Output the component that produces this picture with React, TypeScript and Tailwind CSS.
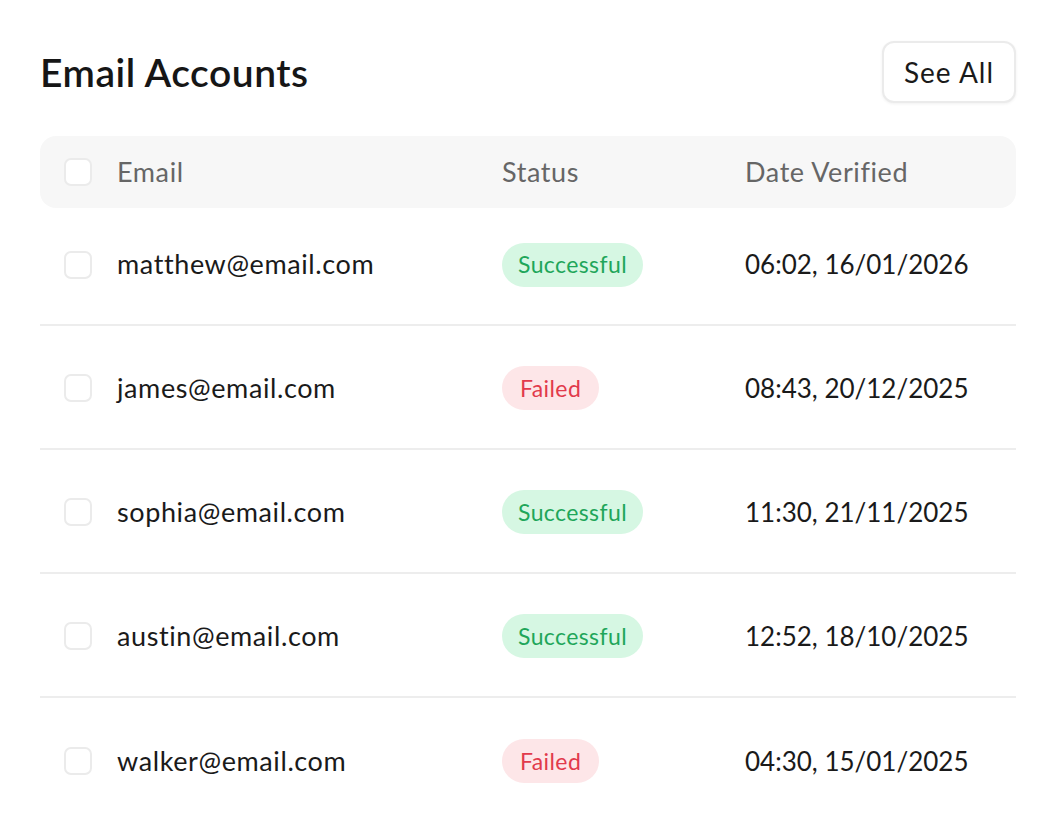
import React from "react";

type Row = { email: string; ok: boolean; date: string };

const rows: Row[] = [
  { email: "matthew@email.com", ok: true, date: "06:02, 16/01/2026" },
  { email: "james@email.com", ok: false, date: "08:43, 20/12/2025" },
  { email: "sophia@email.com", ok: true, date: "11:30, 21/11/2025" },
  { email: "austin@email.com", ok: true, date: "12:52, 18/10/2025" },
  { email: "walker@email.com", ok: false, date: "04:30, 15/01/2025" },
];

function Box() {
  return <div className="w-[28px] h-[28px] rounded-[7px] border-2 border-[#ebebeb] bg-white shrink-0" />;
}

export default function App() {
  return (
    <div
      className="w-[1056px] h-[828px] bg-white overflow-hidden px-[40px] pt-[41px]"
      style={{ fontFamily: "Lato, 'Noto Sans', sans-serif" }}
    >
      <div className="flex items-center justify-between h-[62px] mb-[33px]">
        <h1 className="text-[39px] font-semibold text-[#161616] tracking-[0.5px]">Email Accounts</h1>
        <button className="w-[134px] h-[62px] rounded-[12px] border-2 border-[#ebebeb] bg-white shadow-[0_1px_3px_rgba(0,0,0,0.06)] text-[28px] tracking-[1px] text-[#1a1a1a]">
          See All
        </button>
      </div>
      <div className="flex items-center h-[72px] rounded-[16px] bg-[#f7f7f7] px-[24px] text-[27px] tracking-[0.6px] text-[#666666]">
        <Box />
        <div className="ml-[25px] w-[385px]">Email</div>
        <div className="w-[243px]">Status</div>
        <div>Date Verified</div>
      </div>
      {rows.map((r, i) => (
        <div
          key={r.email}
          className={
            "flex items-center px-[24px] text-[#1a1a1a] " +
            (i === 0 ? "h-[118px] pb-[3px] " : "h-[124px] pt-[2px] ") +
            (i < rows.length - 1 ? "border-b-2 border-[#ededed]" : "")
          }
        >
          <Box />
          <div className="ml-[25px] w-[385px] text-[27px] tracking-[0.6px]">{r.email}</div>
          <div className="w-[243px]">
            {r.ok ? (
              <span className="inline-flex items-center h-[44px] px-[16px] rounded-full bg-[#d6f7e3] text-[#1fa65a] text-[23px] tracking-[0.4px]">
                Successful
              </span>
            ) : (
              <span className="inline-flex items-center h-[44px] px-[18px] rounded-full bg-[#fde6e8] text-[#e23a4b] text-[23px] tracking-[0.4px]">
                Failed
              </span>
            )}
          </div>
          <div className="text-[26px]">{r.date}</div>
        </div>
      ))}
    </div>
  );
}
